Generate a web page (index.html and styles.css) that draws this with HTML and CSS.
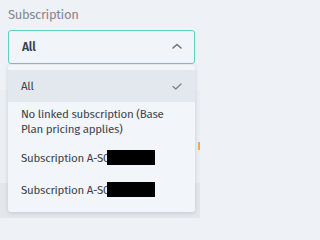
FILE: index.html
```html
<!DOCTYPE html>
<html>
<head>
<meta charset="utf-8">
<link rel="stylesheet" href="styles.css">
</head>
<body>
<div class="page">
  <div class="bg-bands">
    <div class="band band-top"></div>
    <div class="band band-mid"></div>
    <div class="band band-bottom"></div>
  </div>
  <div class="field">
    <label class="label">Subscription</label>
    <div class="select">
      <span class="value">All</span>
      <svg class="chev" width="10" height="6" viewBox="0 0 10 6"><path d="M1 5 L5 1.5 L9 5" fill="none" stroke="#6b7380" stroke-width="1.6" stroke-linecap="round" stroke-linejoin="round"/></svg>
    </div>
    <div class="menu">
      <div class="opt active"><span>All</span>
        <svg class="check" width="10" height="7" viewBox="0 0 10 7"><path d="M1 3.5 L3.8 6 L9 1" fill="none" stroke="#7a8290" stroke-width="1.3" stroke-linecap="round" stroke-linejoin="round"/></svg>
      </div>
      <div class="opt two">No linked subscription (Base Plan pricing applies)</div>
      <div class="opt"><span>Subscription A-S0</span><span class="redact"></span></div>
      <div class="opt"><span>Subscription A-S0</span><span class="redact"></span></div>
    </div>
  </div>
  <div class="orange"></div>
</div>
</body>
</html>
```
FILE: styles.css
```css
html, body {
  margin: 0;
  padding: 0;
  background: #eef1f5;
}
body {
  width: 200px;
  height: 218px;
  overflow: hidden;
  font-family: "Fira Sans", "Noto Sans", "Open Sans", sans-serif;
}
.page {
  position: relative;
  width: 200px;
  height: 218px;
}
.bg-bands {
  position: absolute;
  inset: 0;
  display: flex;
  flex-direction: column;
}
.band-top { height: 90px; background: #eef1f5; }
.band-mid { height: 93px; background: #ebeef3; }
.band-bottom { flex: 1; background: #e3e7ec; }
.field {
  position: relative;
  padding: 6px 5px 0 8px;
}
.label {
  display: block;
  font-size: 13px;
  line-height: 18px;
  color: #7f8792;
  margin-bottom: 6px;
  letter-spacing: -0.35px;
}
.select {
  height: 32px;
  border: 1px solid #5fd0c6;
  border-radius: 3px;
  background: #f1f4f8;
  display: flex;
  align-items: center;
  justify-content: space-between;
  padding: 0 12px 0 13px;
}
.value {
  font-size: 12px;
  font-weight: 600;
  color: #3b414a;
  letter-spacing: -0.2px;
}
.chev { display: block; margin-top: -2px; }
.menu {
  margin-top: 1px;
  background: #f2f5f9;
  border-radius: 3px;
  box-shadow: 0 1px 4px rgba(60, 70, 90, 0.18);
  padding: 5px 0 6px;
}
.opt {
  position: relative;
  display: flex;
  align-items: center;
  height: 32px;
  padding: 0 13px;
  font-size: 11.5px;
  letter-spacing: -0.25px;
  color: #3d434c;
  white-space: nowrap;
}
.opt.active {
  background: #e3e8ef;
  justify-content: space-between;
  padding-right: 13px;
}
.opt.two {
  height: 40px;
  white-space: normal;
  line-height: 15px;
}
.check { display: block; }
.redact {
  position: absolute;
  left: 99px;
  top: 8px;
  width: 48px;
  height: 15px;
  background: #000;
}
.orange {
  position: absolute;
  left: 198px;
  top: 142px;
  width: 2px;
  height: 8px;
  background: #f0a860;
}
```
